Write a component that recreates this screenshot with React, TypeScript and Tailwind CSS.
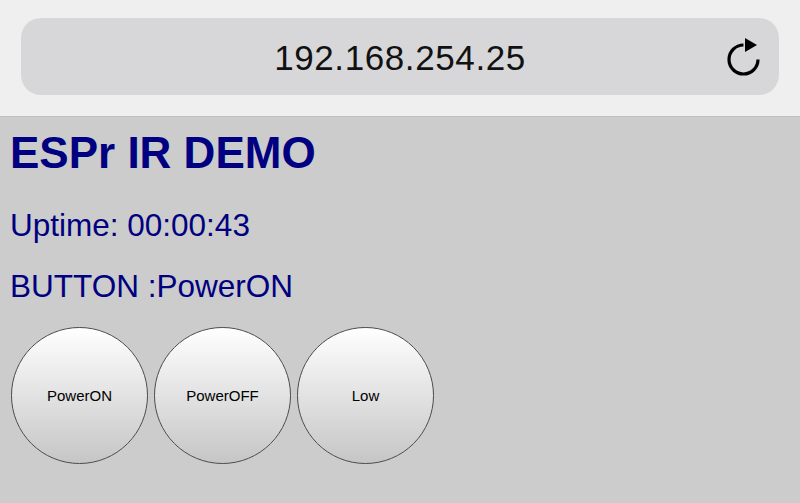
import React from "react";

function Reload() {
  return (
    <svg width="40" height="44" viewBox="0 0 40 44" className="absolute left-[724px] top-[34px]">
      <path d="M 19.5 11 A 14.5 14.5 0 1 0 34 25.5" fill="none" stroke="#000" strokeWidth="3.2" />
      <polygon points="21,4 33,11 21,18" fill="#000" />
    </svg>
  );
}

function Btn({ label }: { label: string }) {
  return (
    <div className="w-[137px] h-[137px] rounded-full border border-[#4d4d4d] bg-gradient-to-b from-[#ffffff] to-[#c6c6c6] flex items-center justify-center text-[15px] text-black pt-[1px]">
      {label}
    </div>
  );
}

export default function App() {
  return (
    <div className="w-[800px] h-[503px] overflow-hidden bg-[#cccccc]" style={{ fontFamily: '"Liberation Sans", Arial, sans-serif' }}>
      <div className="relative h-[117px] bg-[#efefef] border-b border-[#c0c0c0] pt-[18px] px-[21px]">
        <div className="h-[77px] rounded-[20px] bg-[#d7d7d9] flex items-center justify-center">
          <span className="text-[35px] tracking-[0.6px] text-[#111] leading-none mt-[2px]">192.168.254.25</span>
        </div>
        <Reload />
      </div>
      <div className="pl-[10px] pt-[11px] text-[#000080]">
        <div className="text-[44px] font-bold leading-[50px]">ESPr IR DEMO</div>
        <div className="text-[31.5px] leading-[36px] mt-[29px]">Uptime: 00:00:43</div>
        <div className="text-[31.5px] leading-[36px] mt-[25px]">BUTTON :PowerON</div>
        <div className="flex gap-[6px] mt-[23px] ml-[1px]">
          <Btn label="PowerON" />
          <Btn label="PowerOFF" />
          <Btn label="Low" />
        </div>
      </div>
    </div>
  );
}
